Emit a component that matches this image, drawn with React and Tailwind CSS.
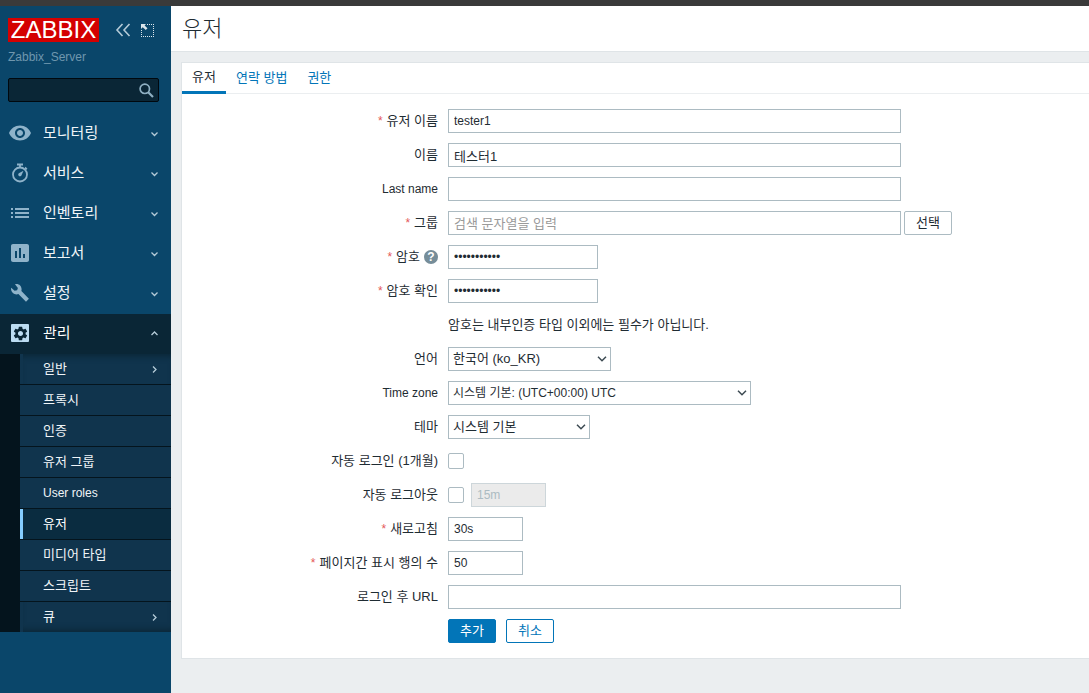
import React from 'react';
import { MdVisibility, MdAssessment, MdSettings } from 'react-icons/md';

function StopwatchIcon() {
  return (
    <svg width="24" height="24" viewBox="0 0 24 24" fill="none" stroke="currentColor" aria-hidden="true">
      <circle cx="12" cy="13.5" r="7" strokeWidth="1.8" />
      <path d="M9 3.5h6M12 4v3M17 6.5l1.8 1.8" strokeWidth="1.8" />
      <path d="M15.5 9.8l-2 4.4a1.7 1.7 0 1 1-2.2-2.2z" fill="currentColor" stroke="none" />
    </svg>
  );
}

function ListIcon() {
  return (
    <svg width="24" height="24" viewBox="0 0 24 24" fill="currentColor" aria-hidden="true">
      <path d="M3 7h2v2H3zM7 7h14v2H7zM3 11h2v2H3zM7 11h14v2H7zM3 15h2v2H3zM7 15h14v2H7z" />
    </svg>
  );
}

function WrenchIcon() {
  return (
    <svg width="18" height="18" viewBox="0 0 18 18" fill="currentColor" aria-hidden="true">
      <path d="M4 .3C8-.8 11.500 2.500 10.400 7L17.900 14.800 15 17.800 7.400 10.100C3.500 11.500-.8 8 .2 3.800L3.600 6.800 6.100 6.200 6.900 3.900z" />
    </svg>
  );
}

const chevrons = {
  down: 'M1.5 3.5L4.5 6.5L7.5 3.5',
  up: 'M1.5 6L4.5 3L7.5 6',
  right: 'M3 1.5L6 4.5L3 7.5',
};

function Chevron({ dir }) {
  return (
    <svg width="9" height="9" viewBox="0 0 9 9" fill="none" stroke="currentColor" strokeWidth="1.3" className="text-[#b5cbd8]" aria-hidden="true">
      <path d={chevrons[dir]} />
    </svg>
  );
}

const menu = [
  { label: '모니터링', icon: <MdVisibility size={24} /> },
  { label: '서비스', icon: <StopwatchIcon /> },
  { label: '인벤토리', icon: <ListIcon /> },
  { label: '보고서', icon: <MdAssessment size={24} /> },
  { label: '설정', icon: <WrenchIcon /> },
];

const submenu = [
  { label: '일반', more: true, shade: 'shadow-[inset_0_6px_6px_-4px_#0a2636] ' },
  { label: '프록시' },
  { label: '인증' },
  { label: '유저 그룹' },
  { label: 'User roles', latin: true },
  { label: '유저', active: true },
  { label: '미디어 타입' },
  { label: '스크립트' },
  { label: '큐', more: true, shade: 'shadow-[inset_0_-6px_6px_-4px_#0a2636] ' },
];

function Sidebar() {
  return (
    <aside className="w-[171px] shrink-0 bg-[#0a466a] text-white">
      <div className="flex items-center pl-2 pt-3">
        <a href="#home" className="flex h-6 w-[91px] items-center justify-center bg-[#d40000] text-2xl leading-6">ZABBIX</a>
        <button type="button" aria-label="Collapse sidebar" className="ml-4 text-[#b5cbd8]">
          <svg width="16" height="14" viewBox="0 0 16 14" fill="none" stroke="currentColor" strokeWidth="1.6">
            <path d="M7.5 1L2 7l5.500 6M14.500 1L9 7l5.500 6" />
          </svg>
        </button>
        <button type="button" aria-label="Hide sidebar" className="ml-2.5 text-[#dbe6ec]">
          <svg width="13" height="13" viewBox="0 0 13 13" fill="none" stroke="currentColor">
            <path d="M6 .5h7M12.500 2v11M0 12.500h12M.5 6v7" strokeDasharray="1 1" />
            <path d="M0 0h5L3.600 1.400 6.500 4.300 4.800 6 1.700 3.300 0 5z" fill="currentColor" stroke="none" />
          </svg>
        </button>
      </div>
      <div className="mt-1.5 pl-2 text-xs leading-[18px] text-[#6f97ae]">Zabbix_Server</div>
      <form className="ml-2 mr-3 mt-3 flex h-6 items-center rounded-xs border border-[#00080e] bg-[#0a2636] pr-1" onSubmit={(e) => e.preventDefault()}>
        <input type="text" aria-label="Search" className="h-full min-w-0 flex-1 bg-transparent px-1 text-xs outline-none" />
        <button type="submit" aria-label="Search" className="text-[#8fb0c3]">
          <svg width="15" height="15" viewBox="0 0 15 15" fill="none" stroke="currentColor">
            <circle cx="5.800" cy="5.800" r="4.700" strokeWidth="1.700" />
            <path d="M9 9l5 5" strokeWidth="2.200" />
          </svg>
        </button>
      </form>
      <nav className="mt-3">
        {menu.map((m) => (
          <a key={m.label} href="#menu" className="flex h-10 items-center pb-0.5 pr-3 text-[15px] leading-5 text-[#f0f5f8]">
            <span className="flex w-10 justify-center text-[#8fb3ca]">{m.icon}</span>
            <span className="flex-1 pl-[3px]">{m.label}</span>
            <Chevron dir="down" />
          </a>
        ))}
        <a href="#menu" className="flex h-10 items-center bg-[#0a2636] pb-0.5 pr-3 text-[15px] leading-5 text-white">
          <span className="flex w-10 justify-center">
            <span className="flex size-[18px] items-center justify-center rounded-[1px] bg-[#bcdcf2] text-[#0a2636]">
              <MdSettings size={17} />
            </span>
          </span>
          <span className="flex-1 pl-[3px]">관리</span>
          <Chevron dir="up" />
        </a>
        <ul className="flex flex-col gap-px bg-[#04141d] pl-5">
          {submenu.map((s) => (
            <li key={s.label}>
              <a
                href="#submenu"
                className={
                  (s.active ? 'border-[#85cdff] bg-[#0a2c40] text-white ' : 'border-[#10344d] bg-[#10344d] text-[#f0f5f8] ') +
                  (s.latin ? 'text-xs ' : 'text-[13px] ') +
                  (s.shade || '') +
                  'flex h-[30px] items-center border-l-3 pl-5 pr-3 leading-5'
                }
              >
                <span className="flex-1">{s.label}</span>
                {s.more && <Chevron dir="right" />}
              </a>
            </li>
          ))}
        </ul>
      </nav>
    </aside>
  );
}

function Row({ label, id, required, latin, help, children }) {
  return (
    <div className="flex gap-2.5">
      <div className="flex w-64 shrink-0 items-center justify-end leading-6">
        {label && (
          <label htmlFor={id} className={latin ? 'text-xs leading-6' : 'text-[13px] leading-6'}>
            {required && <span className="mr-1 text-xs text-[#e45959]">*</span>}
            {label}
          </label>
        )}
        {help && (
          <button type="button" aria-label="Help" className="ml-1 size-3.5 rounded-full bg-[#768d99] text-center text-xs font-bold leading-[14px] text-white">?</button>
        )}
      </div>
      <div className="flex min-w-0 flex-1 items-center">{children}</div>
    </div>
  );
}

const field = 'h-6 border border-[#acbbc2] bg-white px-[5px] outline-none ';
const wide = field + 'w-[453px] min-w-0 ';

function Select({ id, className, value }) {
  return (
    <div className={'relative ' + className}>
      <select id={id} className="h-6 w-full appearance-none border border-[#acbbc2] bg-white pl-1 pr-5 outline-none">
        <option>{value}</option>
      </select>
      <svg width="10" height="6" viewBox="0 0 10 6" fill="none" stroke="#3c4a52" strokeWidth="1.500" className="pointer-events-none absolute right-1 top-[9px]" aria-hidden="true">
        <path d="M1 .7l4 4 4-4" />
      </svg>
    </div>
  );
}

const checkbox = 'size-4 appearance-none rounded-xs border border-[#acbbc2] bg-white';

export default function App() {
  return (
    <div className="flex min-h-screen flex-col bg-[#ebeef0] font-['Liberation_Sans','Noto_Sans_CJK_KR',sans-serif] text-xs text-[#1f2c33]">
      <div className="h-1.5 bg-[#3a3a3a]" />
      <div className="flex flex-1">
        <Sidebar />
        <main className="min-w-0 flex-1">
          <header className="flex h-[46px] items-center border-b border-[#dfe4e7] bg-white pl-[11px]">
            <h1 className="text-[22px] font-light leading-7">유저</h1>
          </header>
          <section className="ml-2.5 mt-2.5 border-y border-l border-[#dfe4e7] bg-white">
            <div role="tablist" className="flex h-[31px] border-b border-[#ebeef0] text-[13px]">
              <button type="button" role="tab" aria-selected="true" className="-mb-px border-b-3 border-[#0275b8] px-2.5">유저</button>
              <button type="button" role="tab" aria-selected="false" className="px-2.5 text-[#0275b8]">연락 방법</button>
              <button type="button" role="tab" aria-selected="false" className="px-2.5 text-[#0275b8]">권한</button>
            </div>
            <form className="flex flex-col gap-2.5 py-[15px]" onSubmit={(e) => e.preventDefault()}>
              <Row label="유저 이름" id="username" required>
                <input id="username" type="text" defaultValue="tester1" className={wide} />
              </Row>
              <Row label="이름" id="name">
                <input id="name" type="text" defaultValue="테스터1" className={wide + 'text-[13px]'} />
              </Row>
              <Row label="Last name" id="surname" latin>
                <input id="surname" type="text" className={wide} />
              </Row>
              <Row label="그룹" id="groups" required>
                <input id="groups" type="text" placeholder="검색 문자열을 입력" className={wide + 'text-[13px] placeholder:text-[#9a9a9a]'} />
                <button type="button" className="ml-[3px] h-6 w-12 shrink-0 rounded-xs border border-[#acbbc2] bg-white text-[13px] leading-5">선택</button>
              </Row>
              <Row label="암호" id="password" required help>
                <input id="password" type="password" defaultValue="abcdefghijk" className={field + 'w-[150px]'} />
              </Row>
              <Row label="암호 확인" id="password2" required>
                <input id="password2" type="password" defaultValue="abcdefghijk" className={field + 'w-[150px]'} />
              </Row>
              <Row>
                <p className="text-[13px] leading-6">암호는 내부인증 타입 이외에는 필수가 아닙니다.</p>
              </Row>
              <Row label="언어" id="lang">
                <Select id="lang" className="w-[163px] text-[13px]" value="한국어 (ko_KR)" />
              </Row>
              <Row label="Time zone" id="timezone" latin>
                <Select id="timezone" className="w-[303px] text-xs" value="시스템 기본: (UTC+00:00) UTC" />
              </Row>
              <Row label="테마" id="theme">
                <Select id="theme" className="w-[142px] text-[13px]" value="시스템 기본" />
              </Row>
              <Row label="자동 로그인 (1개월)" id="autologin">
                <input id="autologin" type="checkbox" className={checkbox} />
              </Row>
              <Row label="자동 로그아웃" id="autologout">
                <input id="autologout" type="checkbox" className={checkbox} />
                <input type="text" aria-label="자동 로그아웃 시간" disabled defaultValue="15m" className="ml-[7px] h-6 w-[75px] border border-[#cdd6da] bg-[#ebebeb] px-[5px] text-[#acbbc2]" />
              </Row>
              <Row label="새로고침" id="refresh" required>
                <input id="refresh" type="text" defaultValue="30s" className={field + 'w-[75px]'} />
              </Row>
              <Row label="페이지간 표시 행의 수" id="rows" required>
                <input id="rows" type="text" defaultValue="50" className={field + 'w-[75px]'} />
              </Row>
              <Row label="로그인 후 URL" id="url">
                <input id="url" type="text" className={wide} />
              </Row>
              <Row>
                <button type="submit" className="h-6 w-12 rounded-xs border border-[#0275b8] bg-[#0275b8] text-[13px] leading-5 text-white">추가</button>
                <button type="button" className="ml-2.5 h-6 w-12 rounded-xs border border-[#0275b8] bg-white text-[13px] leading-5 text-[#0275b8]">취소</button>
              </Row>
            </form>
          </section>
        </main>
      </div>
    </div>
  );
}
